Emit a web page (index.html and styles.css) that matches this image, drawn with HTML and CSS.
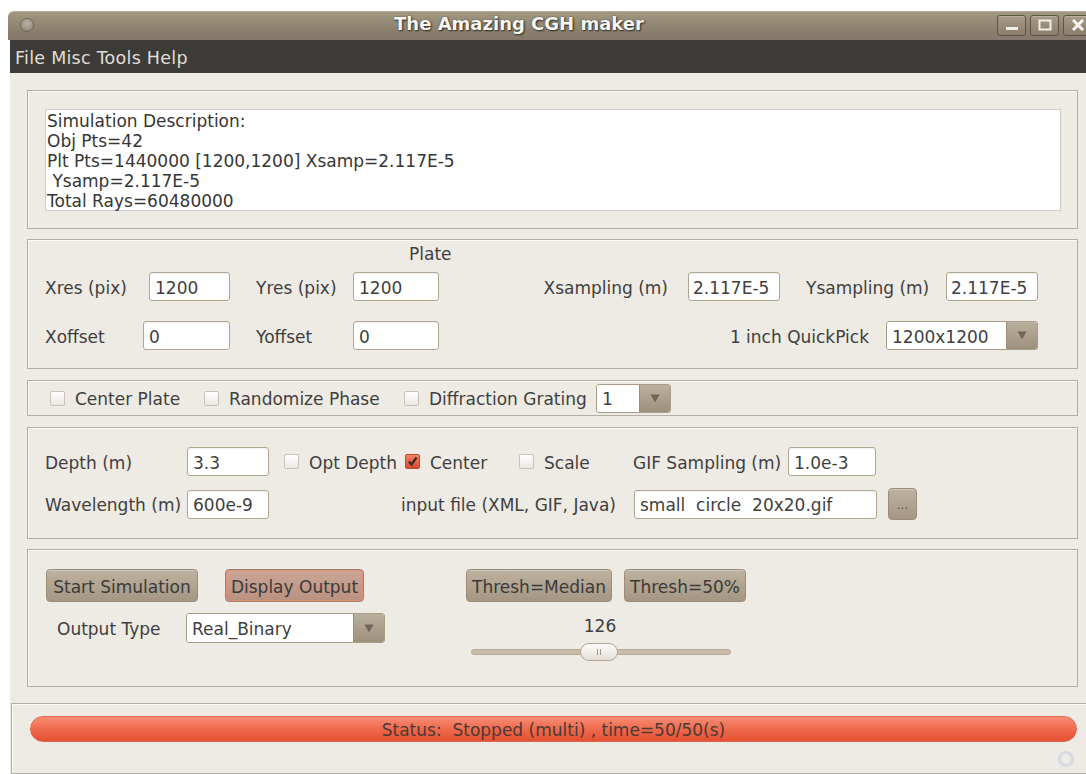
FILE: index.html
```html
<!DOCTYPE html>
<html lang="en">
<head>
<meta charset="utf-8">
<title>The Amazing CGH maker</title>
<link rel="stylesheet" href="styles.css">
</head>
<body>
<div class="window">
  <header class="titlebar">
    <span class="tb-dot"></span>
    <div class="tb-title">The Amazing CGH maker</div>
    <div class="tb-buttons">
      <span class="tb-btn"><svg width="14" height="12" viewBox="0 0 14 12"><rect x="1" y="8" width="12" height="3" fill="#f2efe9"/></svg></span>
      <span class="tb-btn"><svg width="14" height="12" viewBox="0 0 14 12"><rect x="1.5" y="1.5" width="11" height="9" fill="none" stroke="#f2efe9" stroke-width="2"/></svg></span>
      <span class="tb-btn"><svg width="14" height="12" viewBox="0 0 14 12"><path d="M2 1 L12 11 M12 1 L2 11" stroke="#f7f5f1" stroke-width="3"/></svg></span>
    </div>
  </header>

  <nav class="menubar"><span>File</span> <span>Misc</span> <span>Tools</span> <span>Help</span></nav>

  <main class="content">
    <div class="panels">
      <section class="panel p-desc">
        <div class="desc">Simulation Description:<br>Obj Pts=42<br>Plt Pts=1440000 [1200,1200] Xsamp=2.117E-5<br>&nbsp;Ysamp=2.117E-5<br>Total Rays=60480000</div>
      </section>

      <section class="panel p-plate">
        <div class="plate-title">Plate</div>
        <div class="row r-plate1">
          <label class="lbl w-xres">Xres (pix)</label>
          <div class="field f-xres">1200</div>
          <label class="lbl w-yres">Yres (pix)</label>
          <div class="field f-yres">1200</div>
          <label class="lbl w-xs">Xsampling (m)</label>
          <div class="field f-samp">2.117E-5</div>
          <label class="lbl w-ys">Ysampling (m)</label>
          <div class="field f-samp">2.117E-5</div>
        </div>
        <div class="row r-plate2">
          <label class="lbl w-xoff">Xoffset</label>
          <div class="field f-xoff">0</div>
          <label class="lbl w-yres">Yoffset</label>
          <div class="field f-yres">0</div>
          <label class="lbl w-qp">1 inch QuickPick</label>
          <div class="combo c-qp"><span class="combo-val">1200x1200</span><span class="combo-arrow"><svg width="10" height="9" viewBox="0 0 10 9"><path d="M0.5 0.5 H9.5 L5 8.5 Z" fill="#6f6659"/></svg></span></div>
        </div>
      </section>

      <section class="panel p-opts">
        <div class="check ck-center"><span class="cb"></span><span>Center Plate</span></div>
        <div class="check ck-random"><span class="cb"></span><span>Randomize Phase</span></div>
        <div class="check ck-grating"><span class="cb"></span><span>Diffraction Grating</span></div>
        <div class="combo c-grating"><span class="combo-val">1</span><span class="combo-arrow"><svg width="10" height="9" viewBox="0 0 10 9"><path d="M0.5 0.5 H9.5 L5 8.5 Z" fill="#6f6659"/></svg></span></div>
      </section>

      <section class="panel p-optics">
        <div class="row r-depth">
          <label class="lbl w-depth">Depth (m)</label>
          <div class="field f-depth">3.3</div>
          <div class="check cell-opt"><span class="cb"></span><span>Opt Depth</span></div>
          <div class="check cell-center"><span class="cb on"><svg width="13" height="13" viewBox="0 0 13 13"><path d="M3 6.5 L5.5 9.5 L10.5 2.5" fill="none" stroke="#3b2a24" stroke-width="2.2"/></svg></span><span>Center</span></div>
          <div class="check cell-scale"><span class="cb"></span><span>Scale</span></div>
          <label class="lbl w-gif">GIF Sampling (m)</label>
          <div class="field f-gif">1.0e-3</div>
        </div>
        <div class="row r-wave">
          <label class="lbl w-depth">Wavelength (m)</label>
          <div class="field f-depth">600e-9</div>
          <label class="lbl w-input">input file (XML, GIF, Java)</label>
          <div class="field f-file">small&nbsp;&nbsp;circle&nbsp;&nbsp;20x20.gif</div>
          <button class="btn btn-browse">...</button>
        </div>
      </section>

      <section class="panel p-run">
        <div class="run-left">
          <div class="row">
            <button class="btn b-start">Start Simulation</button>
            <button class="btn btn-hot b-display">Display Output</button>
          </div>
          <div class="row r-output">
            <label class="lbl w-out">Output Type</label>
            <div class="combo c-out"><span class="combo-val">Real_Binary</span><span class="combo-arrow"><svg width="10" height="9" viewBox="0 0 10 9"><path d="M0.5 0.5 H9.5 L5 8.5 Z" fill="#6f6659"/></svg></span></div>
          </div>
        </div>
        <div class="run-right">
          <div class="row">
            <button class="btn b-median">Thresh=Median</button>
            <button class="btn b-half">Thresh=50%</button>
          </div>
          <div class="slider-group">
            <div class="slider-value">126</div>
            <div class="slider">
              <div class="slider-track"></div>
              <div class="slider-thumb"><span></span><span></span></div>
            </div>
          </div>
        </div>
      </section>
    </div>

    <footer class="status-panel">
      <div class="progress">Status:&nbsp;&nbsp;Stopped (multi) , time=50/50(s)</div>
      <svg class="grip" width="18" height="18" viewBox="0 0 18 18"><circle cx="9" cy="9" r="6.5" fill="none" stroke="#d6dbe1" stroke-width="3"/></svg>
    </footer>
  </main>
</div>
</body>
</html>
```

FILE: styles.css
```css
* { box-sizing: border-box; }

html, body {
  margin: 0;
  height: 100%;
  overflow: hidden;
}

body {
  background: #ffffff;
  font-family: "DejaVu Sans", "Liberation Sans", sans-serif;
  color: #3f3f3f;
}

/* window frame */
.window {
  margin: 11px 0 0 10px;
  height: 763px;
  display: flex;
  flex-direction: column;
}

.titlebar {
  height: 29px;
  margin-left: -2px;
  border-radius: 6px 0 0 0;
  border-top: 1px solid #b6ac99;
  background: linear-gradient(#a2977f, #968b76 35%, #8b806c 65%, #83786a);
  display: flex;
  align-items: center;
}

.tb-dot {
  width: 14px;
  height: 14px;
  margin: -2px 0 0 12px;
  border-radius: 50%;
  border: 1px solid #6c6458;
  background: radial-gradient(circle at 50% 35%, #b9b1a4, #8c8376);
}

.tb-title {
  flex: 1;
  text-align: center;
  padding: 0 0 5px 7px;
  font-size: 18px;
  font-weight: bold;
  color: #f8f6f2;
  text-shadow: 1px 1px 2px #2e2920, 0 0 1px #2e2920;
}

.tb-buttons {
  display: flex;
  gap: 4px;
  margin: -2px -6px 0 0;
}

.tb-btn {
  width: 29px;
  height: 21px;
  border: 1px solid #5d5547;
  border-radius: 3px;
  background: linear-gradient(#a89c88, #897d69);
  box-shadow: inset 0 1px rgba(255, 255, 255, 0.22);
  display: flex;
  align-items: center;
  justify-content: center;
}

.menubar {
  height: 33px;
  background: #3c3b37;
  color: #e2ded6;
  font-size: 17.5px;
  letter-spacing: 0.25px;
  padding: 8px 0 0 5px;
  white-space: pre;
}

/* client area */
.content {
  flex: 1;
  position: relative;
  background: #eeeae4;
}

.panels {
  padding: 17px 8px 0 17px;
  display: flex;
  flex-direction: column;
}

.panel {
  border: 1px solid #b2aea6;
  box-shadow: inset 1px 1px 0 #faf9f6;
}

.row {
  display: flex;
  align-items: center;
}

.lbl {
  font-size: 17px;
  white-space: nowrap;
  padding-top: 2px;
}

.field {
  height: 29px;
  border: 1px solid #b1a691;
  border-radius: 3px;
  background: #fff;
  padding: 2px 0 0 5px;
  font-size: 17px;
  display: flex;
  align-items: center;
  white-space: nowrap;
  box-shadow: inset 0 1px 1px rgba(0, 0, 0, 0.06);
}

.combo {
  height: 29px;
  display: flex;
  border: 1px solid #a99d89;
  border-radius: 3px;
  overflow: hidden;
  font-size: 17px;
}

.combo-val {
  flex: 1;
  background: #fff;
  padding: 2px 0 0 5px;
  display: flex;
  align-items: center;
}

.combo-arrow {
  width: 31px;
  border-left: 1px solid #9b8f7c;
  background: linear-gradient(#bbb09e, #9d907c);
  display: flex;
  align-items: center;
  justify-content: center;
}

.check {
  display: flex;
  align-items: center;
  gap: 10px;
  font-size: 17px;
  white-space: nowrap;
}

.check > span:last-child { padding-top: 2px; }

.cb {
  width: 15px;
  height: 15px;
  border: 1px solid #c8c2b8;
  border-radius: 2px;
  background: linear-gradient(#ffffff, #ebe8e3);
  display: flex;
  align-items: center;
  justify-content: center;
}

.cb.on {
  border-color: #b94a30;
  background: linear-gradient(#f28466, #d9492c);
}

.btn {
  font-family: inherit;
  font-size: 17px;
  color: #3a3a3a;
  height: 33px;
  padding: 2px 0 0;
  border: 1px solid #9a8d79;
  border-radius: 4px;
  background: linear-gradient(#beb2a0, #a49682);
  box-shadow: inset 0 1px rgba(255, 255, 255, 0.3);
}

.btn-hot {
  border-color: #9c8574;
  background: linear-gradient(#cba696, #b99181);
  box-shadow: inset 0 0 0 1px #e68b73;
}

/* description */
.p-desc {
  height: 139px;
  padding: 18px 16px 0 17px;
}

.desc {
  height: 102px;
  background: #fff;
  border: 1px solid #d0ccc4;
  padding: 1px 1px 0;
  font-size: 17px;
  line-height: 20px;
  color: #363636;
}

/* plate */
.p-plate {
  margin-top: 10px;
  height: 130px;
  padding: 4px 0 0 17px;
}

.plate-title {
  margin-left: 364px;
  font-size: 17px;
  line-height: 19px;
  padding-top: 1px;
}

.r-plate1 { margin-top: 8px; height: 29px; }
.r-plate2 { margin-top: 20px; height: 29px; }

.w-xres { width: 104px; }
.f-xres { width: 81px; }
.w-yres { margin-left: 26px; width: 97px; }
.f-yres { width: 86px; }
.w-xs { width: 249px; text-align: right; padding-right: 20px; }
.f-samp { width: 92px; padding-left: 4px; }
.w-ys { margin-left: 26px; width: 140px; }
.w-xoff { width: 98px; }
.f-xoff { width: 87px; }
.w-qp { width: 447px; text-align: right; padding-right: 17px; }
.c-qp { width: 152px; }

/* options */
.p-opts {
  margin-top: 11px;
  height: 36px;
  padding-left: 22px;
  display: flex;
  align-items: center;
}

.ck-center { width: 154px; }
.ck-random { width: 200px; }
.ck-grating { width: 192px; }
.c-grating { width: 75px; }

/* optics */
.p-optics {
  margin-top: 11px;
  height: 112px;
  padding: 19px 0 0 17px;
}

.r-depth { height: 29px; }
.r-wave { margin-top: 12px; height: 32px; }

.w-depth { width: 142px; }
.f-depth { width: 82px; }
.cell-opt { margin-left: 15px; width: 121px; }
.cell-center { width: 114px; }
.cell-scale { width: 114px; }
.w-gif { width: 155px; }
.f-gif { width: 88px; }
.w-input { margin-left: 132px; width: 233px; }
.f-file { width: 243px; }
.btn-browse {
  margin-left: 11px;
  width: 29px;
  height: 32px;
  font-size: 12px;
  color: #5a5248;
}

/* run controls */
.p-run {
  margin-top: 10px;
  height: 138px;
  padding: 19px 0 0 18px;
  display: flex;
}

.run-left { width: 420px; }
.b-start { width: 152px; }
.b-display { width: 139px; margin-left: 27px; }
.r-output { margin-top: 11px; height: 30px; }
.w-out { margin-left: 11px; width: 129px; }
.c-out { width: 199px; height: 30px; }

.b-median { width: 146px; }
.b-half { width: 122px; margin-left: 12px; }

.slider-group {
  margin: 14px 0 0 5px;
  width: 260px;
}

.slider-value {
  text-align: center;
  font-size: 17px;
  line-height: 20px;
  padding-right: 2px;
}

.slider {
  position: relative;
  margin-top: 7px;
  height: 18px;
}

.slider-track {
  position: relative;
  top: 6px;
  height: 6px;
  border-radius: 3px;
  background: #c9bda9;
  border: 1px solid #b9ac97;
}

.slider-thumb {
  position: absolute;
  left: 109px;
  top: 0;
  width: 38px;
  height: 18px;
  border: 1px solid #b3a898;
  border-radius: 9px;
  background: linear-gradient(#fdfcfb, #e4dfd8);
  display: flex;
  align-items: center;
  justify-content: center;
  gap: 2px;
}

.slider-thumb span {
  width: 1px;
  height: 6px;
  background: #a39886;
}

/* status */
.status-panel {
  margin: 16px 0 0 1px;
  height: 71px;
  border: 1px solid #b2aea6;
  border-right: none;
  box-shadow: inset 1px 1px 0 #faf9f6;
  padding: 12px 0 0 18px;
}

.progress {
  width: 1047px;
  height: 26px;
  border-radius: 13px;
  border: 1px solid #dc6a52;
  background: linear-gradient(#f78d76, #f06d50 45%, #e4502f);
  font-size: 17px;
  line-height: 24px;
  padding-top: 1px;
  text-align: center;
  color: #4b3a35;
}

.grip {
  position: absolute;
  left: 1047px;
  bottom: 6px;
}
```
